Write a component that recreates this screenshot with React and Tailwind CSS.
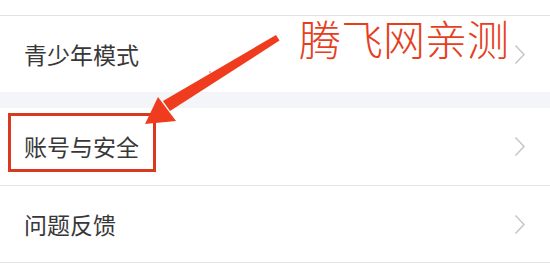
import React from "react";

const font = { fontFamily: '"Noto Sans CJK SC", "Noto Sans", sans-serif' };

function Chevron() {
  return (
    <svg width="12" height="21" viewBox="0 0 12 21" className="shrink-0">
      <polyline points="1.5,1.5 10,10.5 1.5,19.5" fill="none" stroke="#c6c6c6" strokeWidth="1.5" />
    </svg>
  );
}

function Row({ label, children, className = "" }) {
  return (
    <div className={`relative flex items-center justify-between pl-6 pr-[24px] bg-white ${className}`}>
      <span className="text-[23px] leading-none font-normal text-[#383838]">{label}</span>
      <Chevron />
      {children}
    </div>
  );
}

export default function App() {
  return (
    <div className="relative w-[550px] h-[275px] overflow-hidden bg-white" style={font}>
      <div className="h-[16px] border-b border-[#e2e2e2]" />
      <Row label="青少年模式" className="h-[76px]" />
      <div className="h-[16px] bg-[#f4f5f8]" />
      <Row label="账号与安全" className="h-[78px] border-b border-[#e6e6e6]">
        <div className="absolute left-[8px] top-[5px] w-[148px] h-[59px] border-[3px] border-[#d8391f]" />
      </Row>
      <Row label="问题反馈" className="h-[77px] border-b border-[#e2e2e2]" />

      <div className="absolute left-[299px] top-[17px] text-[42px] leading-none font-light text-[#e5401e]">
        腾飞网亲测
      </div>

      <svg className="absolute left-0 top-0" width="550" height="275" viewBox="0 0 550 275">
        <polygon points="276,35 279.5,40.5 170,111 163,101" fill="#f03c1e" />
        <polygon points="145,124 158,97 176,121" fill="#f03c1e" />
        <circle cx="210" cy="72" r="0.7" fill="#d33" />
      </svg>
    </div>
  );
}
